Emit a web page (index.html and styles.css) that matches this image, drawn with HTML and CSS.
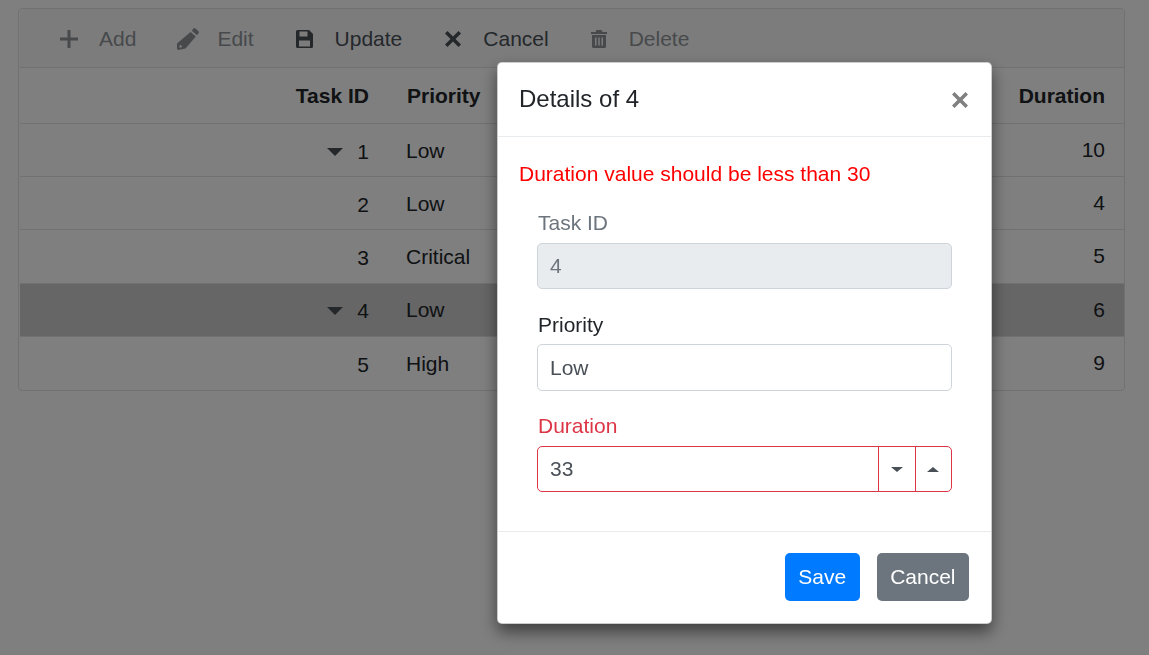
FILE: index.html
```html
<!DOCTYPE html>
<html lang="en">
<head>
<meta charset="utf-8">
<title>Tree grid dialog</title>
<link rel="stylesheet" href="styles.css">
</head>
<body>
<div class="grid">
  <div class="toolbar">
    <span class="tool off add"><svg class="ico" viewBox="0 0 18 18"><path d="M7.500 0h3v7.500H18v3h-7.500V18h-3v-7.500H0v-3h7.500z"/></svg><span>Add</span></span>
    <span class="tool off edit"><svg class="ico ico-edit" viewBox="0 0 22 22"><path d="M16.500 .5a1.500 1.500 0 0 1 2 0l3 2.700a1.500 1.500 0 0 1 .1 2L20 7.300 14.800 2.700zM13.600 4l5.200 4.600L8.500 20.500 1 22 0 21V15.500zM3 16.500l-.8 3.200 3.300-.7z" fill-rule="evenodd"/></svg><span>Edit</span></span>
    <span class="tool save"><svg class="ico ico-save" viewBox="0 0 17 18"><path d="M1.500 0H13l4 4v12.500a1.500 1.500 0 0 1-1.500 1.500h-14A1.500 1.500 0 0 1 0 16.500V1.500A1.500 1.500 0 0 1 1.500 0zM3.500 1.500V6.500h8V1.500zM3 10.500V16.500H14V10.500z" fill-rule="evenodd"/></svg><span>Update</span></span>
    <span class="tool cancel"><svg class="ico ico-x" viewBox="0 0 16 16"><path d="M2.500 0L8 5.500 13.500 0 16 2.500 10.500 8 16 13.500 13.500 16 8 10.500 2.500 16 0 13.500 5.500 8 0 2.500z"/></svg><span>Cancel</span></span>
    <span class="tool off del"><svg class="ico ico-trash" viewBox="0 0 16 18"><path d="M5.500 0h5l1 2H16v2H0V2h4.500zM1 5h14v11.500a1.500 1.500 0 0 1-1.500 1.500h-11A1.500 1.500 0 0 1 1 16.500zM4 7.500v8h1.500v-8zM7.250 7.500v8h1.500v-8zM10.500 7.500v8H12v-8z" fill-rule="evenodd"/></svg><span>Delete</span></span>
  </div>
  <div class="row head"><span class="id">Task ID</span><span class="pri">Priority</span><span class="dur">Duration</span></div>
  <div class="row"><span class="id"><i class="caret"></i>1</span><span class="pri">Low</span><span class="dur">10</span></div>
  <div class="row"><span class="id">2</span><span class="pri">Low</span><span class="dur">4</span></div>
  <div class="row"><span class="id">3</span><span class="pri">Critical</span><span class="dur">5</span></div>
  <div class="row sel"><span class="id"><i class="caret"></i>4</span><span class="pri">Low</span><span class="dur">6</span></div>
  <div class="row last"><span class="id">5</span><span class="pri">High</span><span class="dur">9</span></div>
</div>
<div class="backdrop"></div>
<div class="modal">
  <div class="m-head"><span class="m-title">Details of 4</span><svg class="m-close" viewBox="0 0 16 16"><path d="M2.500 0L8 5.500 13.500 0 16 2.500 10.500 8 16 13.500 13.500 16 8 10.500 2.500 16 0 13.500 5.500 8 0 2.500z"/></svg></div>
  <div class="m-body">
    <div class="err">Duration value should be less than 30</div>
    <div class="fields">
      <div class="field dis"><label>Task ID</label><div class="input">4</div></div>
      <div class="field mid"><label>Priority</label><div class="input tall">Low</div></div>
      <div class="field bad"><label>Duration</label>
        <div class="input spin"><span class="val">33</span><span class="sb"><i class="tri down"></i></span><span class="sb"><i class="tri up"></i></span></div>
      </div>
    </div>
  </div>
  <div class="m-foot"><button class="btn pri-btn">Save</button><button class="btn sec-btn">Cancel</button></div>
</div>
</body>
</html>
```
FILE: styles.css
```css
* { box-sizing: border-box; }
html, body { height: 100%; }
body {
  margin: 0;
  padding: 8px 24px 0 18px;
  background: #fff;
  color: #212529;
  font-family: "Liberation Sans", Arial, sans-serif;
  font-size: 21px;
  overflow: hidden;
}
.grid {
  border: 1px solid #dee2e6;
  border-radius: 4px;
  height: 383px;
  overflow: hidden;
  padding-left: 1px;
}
.toolbar {
  height: 59px;
  background: #f8f9fa;
  border-bottom: 1px solid #dee2e6;
  display: flex;
  align-items: center;
  padding: 2px 0 0 40px;
  gap: 42px;
  color: #495057;
}
.tool { display: flex; align-items: center; gap: 22px; line-height: 24px; }
.tool.off { opacity: .6; }
.tool.add { gap: 21px; margin-right: -1px; }
.tool.edit { gap: 18px; }
.tool.save { margin-right: 1px; }
.ico { width: 18px; height: 18px; fill: currentColor; flex: none; }
.ico-edit { width: 22px; height: 22px; }
.ico-save { width: 17px; height: 18px; }
.ico-x { width: 16px; height: 16px; }
.ico-trash { width: 16px; height: 18px; }
.row {
  height: 53.2px;
  display: flex;
  align-items: center;
  border-bottom: 1px solid #dee2e6;
}
.row.last { border-bottom: 0; }
.row.head { height: 56px; font-weight: 700; }
.row.sel { background: #ccc; }
.id {
  width: 349px;
  text-align: right;
  padding-top: 3px;
}
.head .id { padding-top: 0; }
.pri { margin-left: 37px; flex: 1; padding-top: 1px; }
.head .pri { margin-left: 38px; padding-top: 0; }
.dur { margin-right: 19px; }
.caret {
  display: inline-block;
  width: 0; height: 0;
  border-left: 8px solid transparent;
  border-right: 8px solid transparent;
  border-top: 8px solid #495057;
  margin-right: 14px;
  vertical-align: 3px;
}
.backdrop {
  position: fixed;
  inset: 0;
  background: rgba(0,0,0,.5);
}
.modal {
  position: fixed;
  left: 497px;
  top: 62px;
  width: 495px;
  height: 562px;
  background: #fff;
  border: 1px solid rgba(0,0,0,.2);
  border-radius: 5px;
  box-shadow: 0 8px 16px rgba(0,0,0,.5);
  display: flex;
  flex-direction: column;
}
.m-head {
  height: 74px;
  flex: none;
  border-bottom: 1px solid #e9ecef;
  display: flex;
  align-items: center;
  justify-content: space-between;
  padding: 0 23px 2px 21px;
}
.m-title { font-size: 24px; }
.m-close { width: 16px; height: 16px; fill: #808080; margin-top: 3px; }
.m-body { flex: 1; padding: 0 21px; }
.err { color: #f00; margin-top: 25px; line-height: 24px; }
.fields { padding: 0 18px; margin-top: 25px; }
.field { margin-bottom: 23px; }
.field label { display: block; line-height: 24px; margin: 0 0 8px 1px; }
.field.mid label { padding-top: 1px; margin-bottom: 7px; }
.input {
  height: 46px;
  border: 1px solid #ced4da;
  border-radius: 5px;
  padding: 0 12px;
  display: flex;
  align-items: center;
  color: #495057;
}
.input.tall { height: 47px; }
.dis label { color: #6c757d; }
.dis .input { background: #e9ecef; color: #6c757d; }
.bad label { color: #dc3545; }
.bad .input { border-color: #dc3545; padding-right: 0; }
.val { flex: 1; }
.sb {
  width: 37px;
  align-self: stretch;
  border-left: 1px solid #dc3545;
  display: flex;
  align-items: center;
  justify-content: center;
}
.sb:last-child { width: 36px; padding-right: 1px; }
.tri { width: 0; height: 0; border-left: 6px solid transparent; border-right: 6px solid transparent; }
.tri.down { border-top: 5px solid #495057; }
.tri.up { border-bottom: 5px solid #495057; }
.m-foot {
  height: 92px;
  flex: none;
  border-top: 1px solid #e9ecef;
  display: flex;
  justify-content: flex-end;
  align-items: flex-start;
  padding: 21px 22px 0 0;
  gap: 17px;
}
.btn {
  height: 48px;
  border: 0;
  border-radius: 5px;
  color: #fff;
  font: inherit;
  padding: 0 13.500px;
}
.pri-btn { background: #007bff; }
.sec-btn { background: #6c757d; }
```
